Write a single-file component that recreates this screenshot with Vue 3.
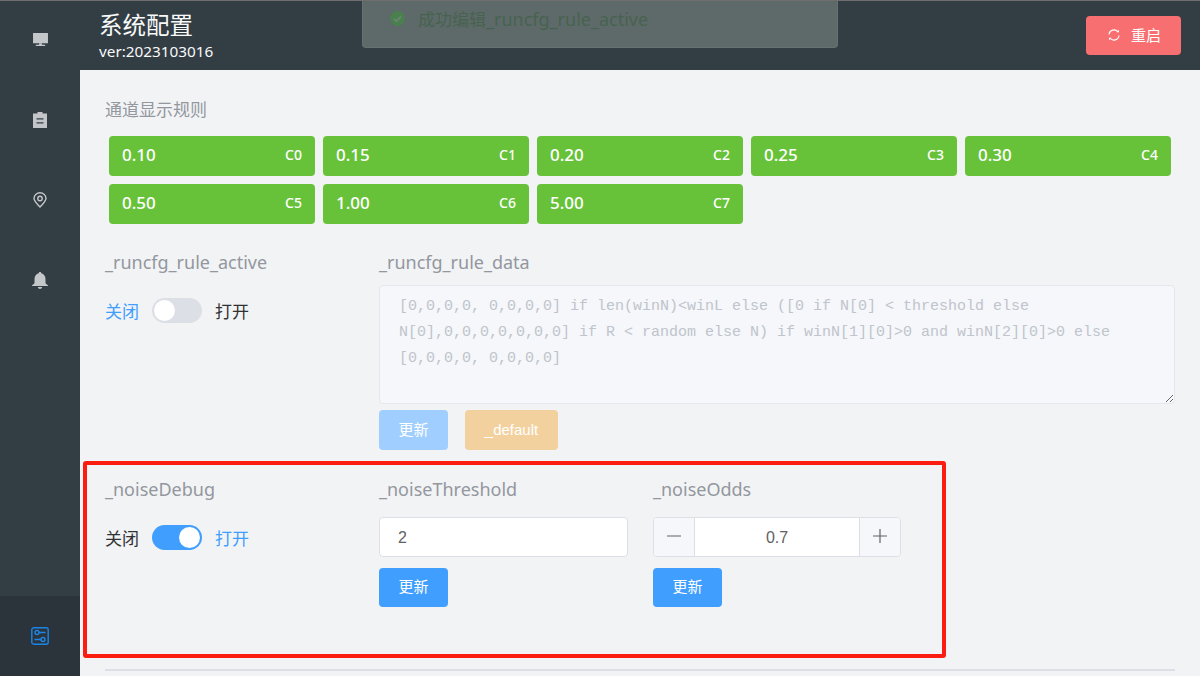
<script setup>
const chips = [
  ['0.10', 'C0'], ['0.15', 'C1'], ['0.20', 'C2'], ['0.25', 'C3'], ['0.30', 'C4'],
  ['0.50', 'C5'], ['1.00', 'C6'], ['5.00', 'C7']
]
const ruleText = '[0,0,0,0, 0,0,0,0] if len(winN)<winL else ([0 if N[0] < threshold else N[0],0,0,0,0,0,0,0] if R < random else N) if winN[1][0]>0 and winN[2][0]>0 else [0,0,0,0, 0,0,0,0]'
</script>

<template>
  <div class="page">
    <aside class="side">
      <div class="nav">
        <svg width="15" height="14" viewBox="0 0 16 15"><path fill="#c4c7ca" d="M0 0h16v11H0z"/><path fill="#c4c7ca" d="M6.500 11h3v1.600h-3zM3 12.600h10V14H3z"/></svg>
      </div>
      <div class="nav">
        <svg width="14" height="16" viewBox="0 0 14 16"><path fill="#c4c7ca" fill-rule="evenodd" d="M4.500 0h5v1.600H14V16H0V1.600h4.500zM3.500 6.200v1.200h7V6.200zm0 4v1.200h7v-1.200z"/></svg>
      </div>
      <div class="nav">
        <svg width="14" height="16" viewBox="0 0 14 16"><path fill="none" stroke="#c4c7ca" stroke-width="1.400" d="M7 15C3.500 11.500 1 9 1 6.500a6 5.700 0 0 1 12 0C13 9 10.500 11.500 7 15z"/><circle cx="7" cy="6.500" r="2.200" fill="none" stroke="#c4c7ca" stroke-width="1.400"/></svg>
      </div>
      <div class="nav">
        <svg width="16" height="17" viewBox="0 0 16 17"><path fill="#c4c7ca" d="M8 0c.8 0 1.200.5 1.300 1.200C12 2 13.500 4.200 13.500 7v4.200L16 13.500V14H0v-.5l2.500-2.300V7c0-2.800 1.500-5 4.200-5.800C6.800.5 7.200 0 8 0zM5.800 15h4.400c-.3 1.200-1.200 2-2.200 2s-1.900-.8-2.200-2z"/></svg>
      </div>
      <div class="nav active">
        <svg width="18" height="18" viewBox="0 0 18 18" fill="none" stroke="#1a85e8" stroke-width="1.400"><rect x=".8" y=".8" width="16.400" height="16.400" rx="2"/><circle cx="6" cy="5.500" r="2"/><path d="M8 5.500h6.500M3.500 12.500H10"/><circle cx="12" cy="12.500" r="2"/></svg>
      </div>
    </aside>

    <div class="main">
      <header class="head">
        <div class="titles">
          <div class="title">系统配置</div>
          <div class="ver">ver:2023103016</div>
        </div>
        <button class="restart">
          <svg width="12" height="12" viewBox="0 0 12 12" fill="none" stroke="#fff" stroke-width="1.100"><path d="M1 5.500A5 5 0 0 1 10 3M11 6.500A5 5 0 0 1 2 9"/><path fill="#fff" stroke="none" d="M8.500 3.200H11V.8zM3.500 8.800H1v2.400z"/></svg>
          <span>重启</span>
        </button>
      </header>

      <main class="content">
        <div class="label first">通道显示规则</div>
        <div class="chips">
          <div v-for="c in chips" :key="c[1]" class="chip">
            <span class="val">{{ c[0] }}</span>
            <span class="tag">{{ c[1] }}</span>
          </div>
        </div>

        <div class="row rule">
          <div class="col">
            <div class="label">_runcfg_rule_active</div>
            <div class="switch-line">
              <span class="on-text">关闭</span>
              <span class="sw"><i class="knob"></i></span>
              <span class="plain">打开</span>
            </div>
          </div>
          <div class="col grow">
            <div class="label">_runcfg_rule_data</div>
            <textarea class="area" disabled :value="ruleText"></textarea>
            <div class="btns">
              <button class="btn faded">更新</button>
              <button class="btn warn">_default</button>
            </div>
          </div>
        </div>

        <div class="row noise">
          <div class="col">
            <div class="label">_noiseDebug</div>
            <div class="switch-line">
              <span class="plain">关闭</span>
              <span class="sw open"><i class="knob"></i></span>
              <span class="on-text">打开</span>
            </div>
          </div>
          <div class="col">
            <div class="label">_noiseThreshold</div>
            <div class="input">2</div>
            <button class="btn primary">更新</button>
          </div>
          <div class="col">
            <div class="label">_noiseOdds</div>
            <div class="stepper">
              <span class="step left">
                <svg width="14" height="14" viewBox="0 0 14 14" stroke="#606266" stroke-width="1.200"><path d="M0 7h14"/></svg>
              </span>
              <span class="num">0.7</span>
              <span class="step right">
                <svg width="14" height="14" viewBox="0 0 14 14" stroke="#606266" stroke-width="1.200"><path d="M0 7h14M7 0v14"/></svg>
              </span>
            </div>
            <button class="btn primary">更新</button>
          </div>
        </div>
        <hr class="rule-line" />
      </main>

      <div class="highlight"></div>
      <div class="toast">
        <svg width="15" height="15" viewBox="0 0 15 15"><circle cx="7.500" cy="7.500" r="7.500" fill="#4a7f4e"/><path d="M4 7.700l2.500 2.400L11 5.500" fill="none" stroke="#73857a" stroke-width="1.500"/></svg>
        <span><span class="cjk">成功编辑</span>_runcfg_rule_active</span>
      </div>
    </div>
  </div>
</template>

<style>
html, body { margin: 0; overflow: hidden; }
</style>

<style scoped>
.page {
  display: flex;
  width: 1200px;
  height: 676px;
  overflow: hidden;
  font-family: "Noto Sans", "Noto Sans CJK SC", sans-serif;
  background: #f2f3f5;
}
.side {
  width: 80px;
  flex: none;
  display: flex;
  flex-direction: column;
  background: #333d44;
  box-shadow: inset 0 1px 0 #6e6e6e;
}
.nav {
  height: 80px;
  flex: none;
  display: flex;
  align-items: center;
  justify-content: center;
}
.nav.active {
  margin-top: auto;
  background: #2c343b;
}
.main {
  flex: 1;
  min-width: 0;
  position: relative;
  display: flex;
  flex-direction: column;
}
.head {
  height: 70px;
  flex: none;
  box-sizing: border-box;
  background: #333d44;
  border-top: 1px solid #6e6e6e;
  display: flex;
  align-items: center;
  justify-content: space-between;
  padding: 0 19px;
  color: #fff;
}
.titles { display: flex; flex-direction: column; }
.title { font-size: 23.500px; line-height: 32px; margin-top: -1px; color: #f8f9f9; }
.ver { font-size: 15.300px; line-height: 20px; color: #f8f9f9; }
.restart {
  width: 95px;
  height: 39px;
  border: 0;
  border-radius: 4px;
  background: #f76f71;
  color: #fff;
  font: 15px "Noto Sans CJK SC", sans-serif;
  display: flex;
  align-items: center;
  justify-content: center;
  gap: 11px;
  padding: 0 0 1px 2px;
  margin-top: -1px;
}
.content {
  flex: 1;
  padding: 0 25px;
  min-height: 0;
}
.label {
  font-size: 18px;
  line-height: 20px;
  padding-bottom: 2px;
  color: #93979e;
}
.label.first { margin-top: 30px; font-size: 17px; }
.chips {
  display: flex;
  flex-wrap: wrap;
  gap: 8px;
  margin: 14px 0 0 4px;
}
.chip {
  width: 206px;
  height: 40px;
  box-sizing: border-box;
  border-radius: 4px;
  background: #67c23a;
  color: #fff;
  display: flex;
  align-items: center;
  justify-content: space-between;
  padding: 0 13px 3px 13px;
}
.val { font-size: 17px; font-weight: 500; }
.tag { font-size: 14px; font-weight: 500; }
.row { display: flex; }
.rule { margin-top: 28px; }
.noise { margin-top: 29px; }
.col { width: 274px; flex: none; }
.col.grow { flex: 1; width: auto; }
.col .btn { display: block; }
.switch-line {
  display: flex;
  align-items: center;
  gap: 13px;
  margin-top: 14px;
  font: 17px "Noto Sans CJK SC", sans-serif;
  height: 25px;
}
.on-text { color: #409eff; }
.plain { color: #303133; }
.sw {
  width: 50px;
  height: 25px;
  border-radius: 13px;
  background: #dcdfe6;
  position: relative;
  flex: none;
}
.sw.open { background: #409eff; }
.knob {
  position: absolute;
  top: 2px;
  left: 2px;
  width: 21px;
  height: 21px;
  border-radius: 50%;
  background: #fff;
}
.sw.open .knob { left: 27px; }
.switch-line { margin-top: 24px; }
.area {
  display: block;
  box-sizing: border-box;
  height: 119px;
  width: 796px;
  margin: 11px 0 0;
  padding: 8px 15px 7px 19px;
  border: 1px solid #e4e7ed;
  border-radius: 4px;
  background: #f5f7fa;
  color: #c0c4cc;
  opacity: 1;
  font: 15px/26px "Liberation Mono", monospace;
  outline: none;
}
.btns { display: flex; gap: 17px; margin-top: 6px; }
.btn {
  height: 40px;
  border: 0;
  border-radius: 4px;
  color: #fff;
  font: 15px "Liberation Sans", "Noto Sans CJK SC", sans-serif;
  padding: 0 0 4px;
}
.btn.warn { padding-bottom: 2px; }
.faded { width: 69px; background: #a0cfff; }
.warn { width: 93px; background: #f3d19e; }
.primary { width: 69px; height: 39px; background: #409eff; margin-top: 11px; }
.input {
  box-sizing: border-box;
  width: 249px;
  height: 40px;
  margin-top: 16px;
  padding: 0 18px;
  line-height: 40px;
  border: 1px solid #dcdfe6;
  border-radius: 4px;
  background: #fff;
  color: #606266;
  font-family: "Liberation Sans", sans-serif;
  font-size: 16px;
}
.stepper {
  box-sizing: border-box;
  width: 248px;
  height: 40px;
  margin-top: 16px;
  border: 1px solid #dcdfe6;
  border-radius: 4px;
  background: #fff;
  display: flex;
  overflow: hidden;
}
.step {
  width: 41px;
  flex: none;
  box-sizing: border-box;
  display: flex;
  align-items: center;
  justify-content: center;
  background: #f5f7fa;
  padding-bottom: 2px;
}
.step.left { border-right: 1px solid #dcdfe6; }
.step.right { border-left: 1px solid #dcdfe6; }
.num {
  flex: 1;
  text-align: center;
  line-height: 40px;
  color: #606266;
  font-family: "Liberation Sans", sans-serif;
  font-size: 16px;
}
.rule-line {
  border: 0;
  height: 2px;
  background: #dcdfe6;
  margin: 62px 0 0;
}
.highlight {
  position: absolute;
  left: 3px;
  top: 461px;
  width: 863px;
  height: 197px;
  box-sizing: border-box;
  border: 4px solid #fb1d10;
  border-radius: 3px;
}
.toast {
  position: absolute;
  left: 282px;
  top: 1px;
  width: 476px;
  height: 47px;
  box-sizing: border-box;
  background: #5e6a6a;
  border: 1px solid #667272;
  border-top: 0;
  border-radius: 0 0 4px 4px;
  display: flex;
  align-items: center;
  gap: 13px;
  padding: 0 0 11px 27px;
  color: #47634f;
  font-size: 18px;
}
.cjk { font-size: 17px; }
</style>
